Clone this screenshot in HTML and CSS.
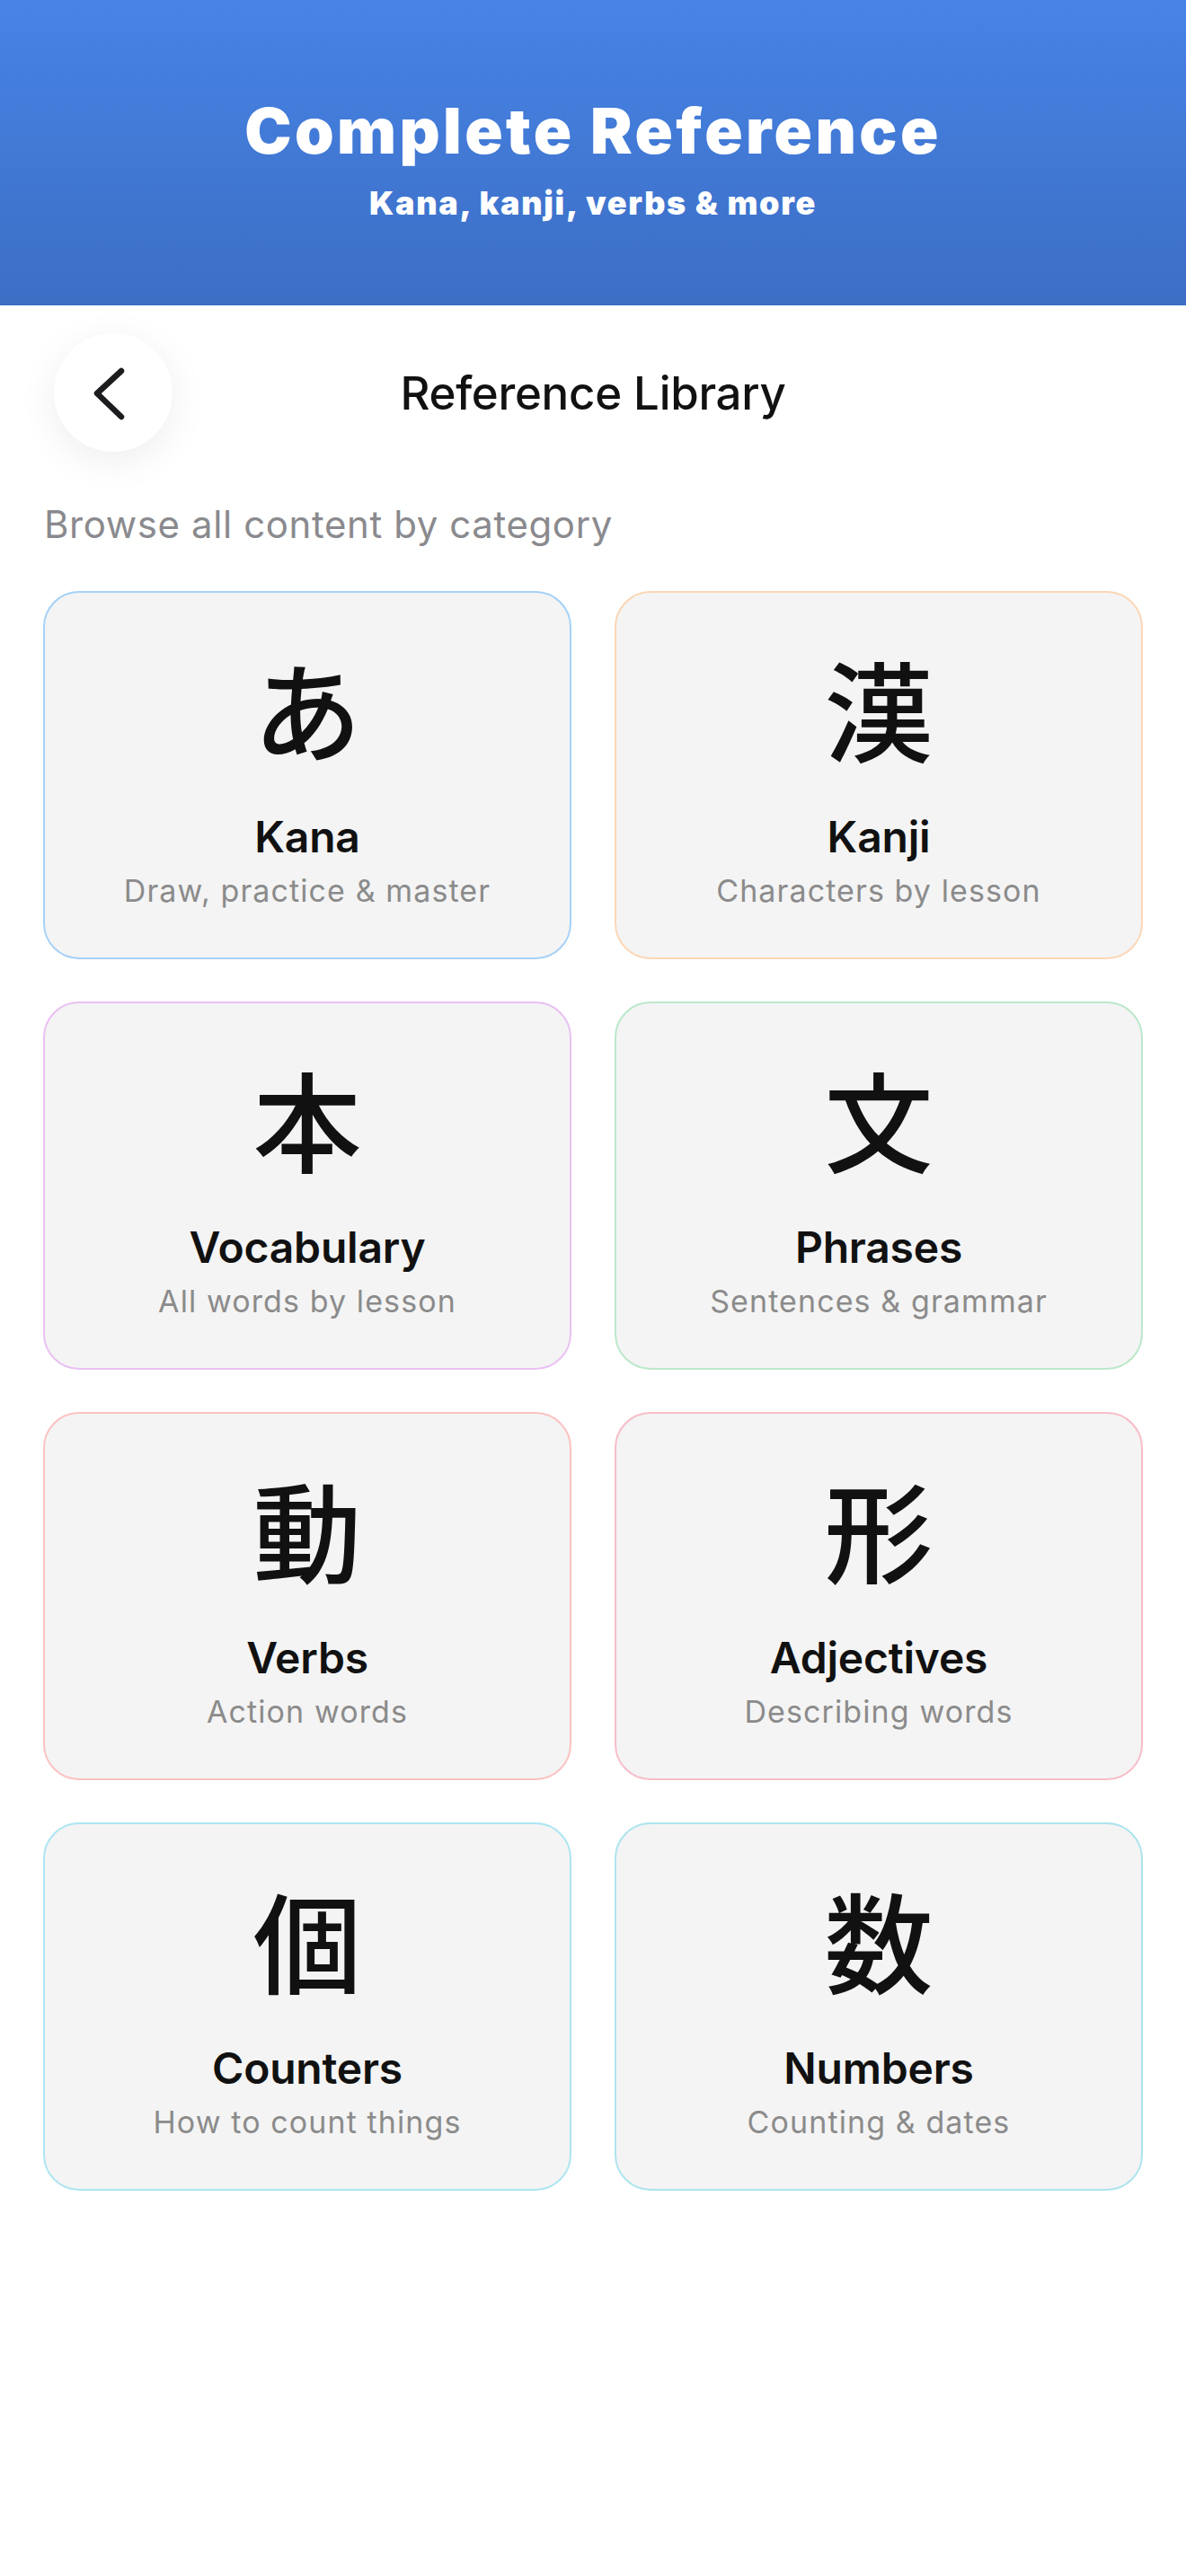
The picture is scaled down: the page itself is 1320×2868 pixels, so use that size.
FILE: index.html
```html
<!DOCTYPE html>
<html lang="en">
    <head>
        <meta charset="UTF-8" />
        <meta name="viewport" content="width=device-width, initial-scale=1.0" />
        <title>Reference Library</title>
        <link rel="stylesheet" href="styles.css">
    </head>
    <body>
        <!-- Banner -->
        <header class="banner">
            <h1>Complete Reference</h1>
            <p>Kana, kanji, verbs &amp; more</p>
        </header>

        <!-- Top bar -->
        <div class="topbar">
            <button class="back-button" aria-label="Back">
                <svg width="132" height="132" viewBox="0 0 132 132">
                    <polyline points="75,42 48,67 75,93" fill="none" stroke="#1c1c1e" stroke-width="6.5" stroke-linecap="round" stroke-linejoin="round" />
                </svg>
            </button>
            <h2>Reference Library</h2>
            <span></span>
        </div>

        <p class="intro">Browse all content by category</p>

        <!-- Categories -->
        <div class="grid">
            <a class="card kana" href="#">
                <span class="glyph">あ</span>
                <span class="card-title">Kana</span>
                <span class="card-sub">Draw, practice &amp; master</span>
            </a>
            <a class="card kanji" href="#">
                <span class="glyph">漢</span>
                <span class="card-title">Kanji</span>
                <span class="card-sub">Characters by lesson</span>
            </a>
            <a class="card vocab" href="#">
                <span class="glyph">本</span>
                <span class="card-title">Vocabulary</span>
                <span class="card-sub">All words by lesson</span>
            </a>
            <a class="card phrases" href="#">
                <span class="glyph">文</span>
                <span class="card-title">Phrases</span>
                <span class="card-sub">Sentences &amp; grammar</span>
            </a>
            <a class="card verbs" href="#">
                <span class="glyph">動</span>
                <span class="card-title">Verbs</span>
                <span class="card-sub">Action words</span>
            </a>
            <a class="card adjectives" href="#">
                <span class="glyph">形</span>
                <span class="card-title">Adjectives</span>
                <span class="card-sub">Describing words</span>
            </a>
            <a class="card counters" href="#">
                <span class="glyph">個</span>
                <span class="card-title">Counters</span>
                <span class="card-sub">How to count things</span>
            </a>
            <a class="card numbers" href="#">
                <span class="glyph">数</span>
                <span class="card-title">Numbers</span>
                <span class="card-sub">Counting &amp; dates</span>
            </a>
        </div>
    </body>
</html>
```

FILE: styles.css
```css
body {
    margin: 0;
    background: #fff;
    font-family: Inter, "Noto Sans", "Noto Sans CJK JP", sans-serif;
    color: #111;
}
.banner {
    box-sizing: border-box;
    height: 340px;
    padding-top: 104px;
    text-align: center;
    color: #fff;
    background: linear-gradient(180deg, #4784e6 0%, #3c6ec4 100%);
}
.banner h1 {
    margin: 0;
    font-size: 70px;
    line-height: 84px;
    font-weight: 900;
    letter-spacing: 3.4px;
}
.banner p {
    margin: 16px 0 0;
    font-size: 36px;
    line-height: 44px;
    font-weight: 900;
    letter-spacing: 1.7px;
}
.topbar {
    display: grid;
    grid-template-columns: 1fr auto 1fr;
    align-items: center;
    padding: 31px 60px 0;
}
.back-button {
    width: 132px;
    height: 132px;
    padding: 0;
    border: none;
    border-radius: 50%;
    background: #fff;
    box-shadow: 0 10px 44px rgba(0, 0, 0, 0.07);
    cursor: pointer;
}
.back-button svg {
    display: block;
}
.topbar h2 {
    margin: 0;
    font-size: 51px;
    font-weight: 500;
    letter-spacing: -0.3px;
}
.intro {
    margin: 56px 0 0 49px;
    font-size: 42px;
    line-height: 50px;
    color: #8a8a8e;
    letter-spacing: 0.6px;
}
.grid {
    display: grid;
    grid-template-columns: 1fr 1fr;
    gap: 47px 48px;
    padding: 49px 48px 0;
}
.card {
    box-sizing: border-box;
    height: 410px;
    padding-top: 67px;
    display: flex;
    flex-direction: column;
    align-items: center;
    border: 2px solid #ddd;
    border-radius: 40px;
    background: #f4f4f4;
    text-decoration: none;
    color: #111;
}
.glyph {
    font-family: "Noto Sans CJK JP", sans-serif;
    font-size: 121px;
    line-height: 120px;
    font-weight: 500;
}
.card-title {
    margin-top: 56px;
    font-size: 48px;
    line-height: 58px;
    font-weight: 600;
    letter-spacing: -0.2px;
}
.card-sub {
    margin-top: 10px;
    font-size: 34px;
    line-height: 42px;
    color: #8b8b8b;
    letter-spacing: 1.1px;
}
.kana { border-color: #a6d1f7; }
.kanji { border-color: #fbd7b6; }
.vocab { border-color: #eac0f3; }
.phrases { border-color: #bce7ca; }
.verbs { border-color: #fbc2c2; }
.adjectives { border-color: #f8bdc9; }
.counters { border-color: #ade5f2; }
.numbers { border-color: #ade4ed; }
```
